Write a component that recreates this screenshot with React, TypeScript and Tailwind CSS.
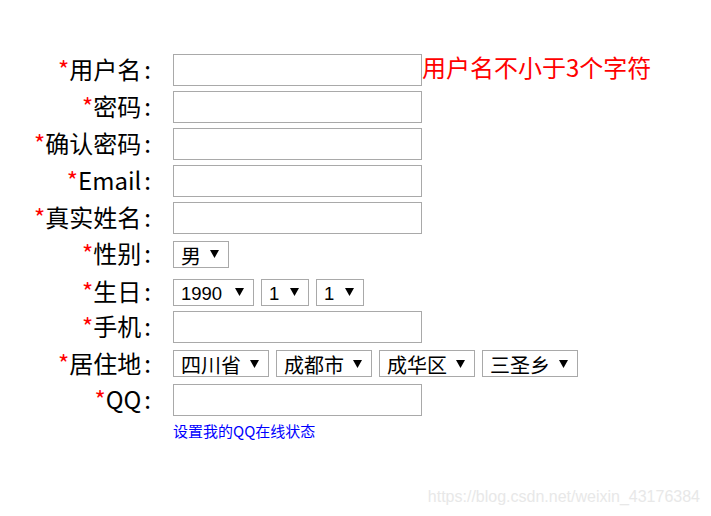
import React from "react";

const labelFont = { fontFamily: '"Microsoft YaHei", "Noto Sans CJK SC", sans-serif' };

function Arrow() {
  return (
    <svg width="9" height="8" viewBox="0 0 9 8" className="shrink-0">
      <polygon points="0,0 9,0 4.5,8" fill="#000" />
    </svg>
  );
}

function Sel({ text, w, cjk }: { text: string; w: string; cjk?: boolean }) {
  return (
    <div
      className={`${w} h-[27px] border border-[#a9a9a9] bg-white flex items-center justify-between pl-[7px] pr-[9px] shrink-0`}
    >
      <span
        className={`${cjk ? "text-[20px]" : "text-[18.5px]"} leading-none text-black mt-[5px] whitespace-nowrap`}
        style={{ fontFamily: '"Liberation Sans", "Noto Sans CJK SC", sans-serif' }}
      >
        {text}
      </span>
      <Arrow />
    </div>
  );
}

function Label({ text }: { text: string }) {
  return (
    <div
      className="w-[151px] shrink-0 flex justify-end items-baseline text-[24px] leading-none text-black whitespace-nowrap mb-[2px]"
      style={labelFont}
    >
      <span className="text-[#ff0000]">*</span>
      <span>{text}</span>
      <span className="ml-[3px]">:</span>
    </div>
  );
}

function Input() {
  return <div className="w-[249px] h-[32px] border border-[#a9a9a9] bg-white shrink-0" />;
}

function Row({ h, label, children }: { h: string; label: string; children: React.ReactNode }) {
  return (
    <div className={`flex items-center ${h}`}>
      <Label text={label} />
      <div className="flex items-center ml-[22px]">{children}</div>
    </div>
  );
}

export default function App() {
  return (
    <div className="relative w-[711px] h-[516px] bg-white overflow-hidden">
      <div className="pt-[51px] flex flex-col">
        <Row h="h-[37px]" label="用户名">
          <Input />
          <span className="text-[24px] leading-none text-[#ff0000] whitespace-nowrap mb-[5px]" style={labelFont}>
            用户名不小于3个字符
          </span>
        </Row>
        <Row h="h-[37px]" label="密码">
          <Input />
        </Row>
        <Row h="h-[37px]" label="确认密码">
          <Input />
        </Row>
        <Row h="h-[37px]" label="Email">
          <Input />
        </Row>
        <Row h="h-[37px]" label="真实姓名">
          <Input />
        </Row>
        <Row h="h-[36px]" label="性别">
          <Sel text="男" w="w-[56px]" cjk />
        </Row>
        <Row h="h-[40px]" label="生日">
          <div className="flex items-center gap-[7px]">
            <Sel text="1990" w="w-[81px]" />
            <Sel text="1" w="w-[48px]" />
            <Sel text="1" w="w-[48px]" />
          </div>
        </Row>
        <Row h="h-[30px]" label="手机">
          <Input />
        </Row>
        <Row h="h-[43px]" label="居住地">
          <div className="flex items-center gap-[7px]">
            <Sel text="四川省" w="w-[96px]" cjk />
            <Sel text="成都市" w="w-[96px]" cjk />
            <Sel text="成华区" w="w-[96px]" cjk />
            <Sel text="三圣乡" w="w-[96px]" cjk />
          </div>
        </Row>
        <Row h="h-[30px]" label="QQ">
          <Input />
        </Row>
        <div className="pl-[173px] mt-[4px]">
          <span className="text-[15px] leading-[18px] text-[#0000ff] whitespace-nowrap" style={labelFont}>
            设置我的QQ在线状态
          </span>
        </div>
      </div>
      <div
        className="absolute right-[11px] top-[487px] text-[16px] leading-[20px] text-[#e8e8e8] whitespace-nowrap"
        style={{ fontFamily: '"Liberation Sans", Arial, sans-serif' }}
      >
        https://blog.csdn.net/weixin_43176384
      </div>
    </div>
  );
}
